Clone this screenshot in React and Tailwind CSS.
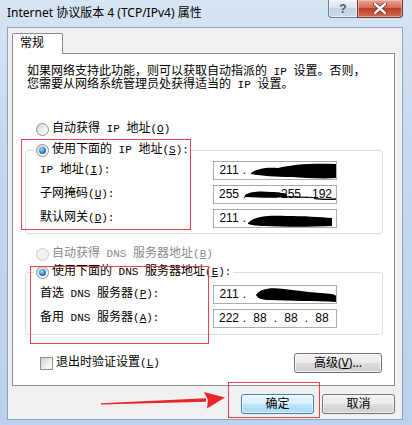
import React from "react";

const BODY = "font-[family-name:'Liberation_Mono','Noto_Sans_CJK_SC',monospace]";
const SANS = "font-[family-name:'Noto_Sans','Noto_Sans_CJK_SC',sans-serif]";
const NUM = "font-[family-name:'Liberation_Sans',sans-serif]";

function Radio({ checked, disabled }) {
  return (
    <span
      className={
        disabled
          ? "flex h-[13px] w-[13px] shrink-0 items-center justify-center rounded-full border border-[#c8c8c8] bg-[#f2f2f2]"
          : "flex h-[13px] w-[13px] shrink-0 items-center justify-center rounded-full border border-[#8e8f8f] bg-[linear-gradient(135deg,#d2d2d2,#f7f7f7_70%,#ffffff)]"
      }
    >
      {checked && (
        <span className="h-[7px] w-[7px] rounded-full bg-[radial-gradient(circle_at_40%_35%,#a9dcfa,#2b7fc4_55%,#0f4c88)]" />
      )}
    </span>
  );
}

function U({ children }) {
  return <span className="underline underline-offset-[1px]">{children}</span>;
}

function L({ children }) {
  return <span className="text-[11px]">{children}</span>;
}

function Blob({ d }) {
  return (
    <svg className="pointer-events-none absolute left-0 top-0" width="124" height="19" viewBox="0 0 124 19">
      <path d={d} fill="#000" />
    </svg>
  );
}

function IpField({ segs, blob }) {
  return (
    <div className={`relative flex h-[19px] w-[124px] shrink-0 items-center overflow-hidden border border-[#abadb3] border-t-[#a4a7ae] bg-white pl-[5px] text-[12px] text-black ${NUM}`}>
      {segs.map((s, i) => (
        <div key={i} className="flex w-[31px] shrink-0 items-center">
          <span className="w-[20px] text-center leading-[17px]">{s}</span>
          {i < 3 && <span className="w-[11px] text-center leading-[17px]">.</span>}
        </div>
      ))}
      {blob && <Blob d={blob} />}
    </div>
  );
}

function Row({ label, children }) {
  return (
    <div className="flex h-[19px] items-center justify-between">
      <span className="leading-[13px]">{label}</span>
      {children}
    </div>
  );
}

function Btn({ children, primary, className = "" }) {
  return (
    <div
      className={
        (primary
          ? "border-[#3c7fb1] bg-[linear-gradient(#eaf6fd,#d9f0fc_50%,#bee6fd_50%,#a7d9f5)] "
          : "border-[#707070] bg-[linear-gradient(#f2f2f2,#ebebeb_50%,#dddddd_50%,#cfcfcf)] ") +
        `flex h-[20px] items-center justify-center rounded-[3px] border text-[12px] text-black shadow-[inset_0_0_0_1px_rgba(255,255,255,0.7)] ${className}`
      }
    >
      {children}
    </div>
  );
}

export default function App() {
  return (
    <div className="relative flex h-[425px] w-[412px] flex-col overflow-hidden bg-[linear-gradient(180deg,#d6e4f3,#c5d8ee_35%,#bcd1eb)] pb-[5px] pl-[7px] pr-[9px]">
      {/* title bar */}
      <div className="flex h-[27px] shrink-0 items-start justify-between">
        <div className={`mt-[5px] whitespace-nowrap text-[12px] leading-[16px] text-black ${SANS}`}>
          Internet 协议版本 4 (TCP/IPv4) 属性
        </div>
        <div className="flex">
          <div className="flex h-[18px] w-[29px] items-center justify-center rounded-bl-[4px] border border-t-0 border-r-0 border-[#6b7d96] bg-[linear-gradient(#eef3f9,#d6e1ee_50%,#c3d2e4_50%,#ccdbec)] shadow-[inset_0_0_0_1px_rgba(255,255,255,0.6)]">
            <span className={`text-[12px] font-bold leading-[12px] text-[#4f5d73] ${NUM}`}>?</span>
          </div>
          <div className="flex h-[18px] w-[46px] items-center justify-center rounded-br-[4px] border border-t-0 border-[#6b3a35] bg-[linear-gradient(#e8a597,#d46a57_45%,#c1402c_50%,#d06a52)] shadow-[inset_0_0_0_1px_rgba(255,220,210,0.5)]">
            <svg width="14" height="11" viewBox="0 0 14 11">
              <path d="M2 1 L12 10 M12 1 L2 10" stroke="#5a2b25" strokeWidth="4" strokeLinecap="round" />
              <path d="M2 1 L12 10 M12 1 L2 10" stroke="#ffffff" strokeWidth="2.4" strokeLinecap="round" />
            </svg>
          </div>
        </div>
      </div>

      {/* client area */}
      <div className={`flex flex-1 flex-col border border-[#8ca2bf] bg-[#f0f0f0] pl-[4px] pr-[7px] pt-[5px] text-[12px] text-black ${BODY}`}>
        <div className="relative z-10 -mb-px flex h-[21px] w-[51px] items-center rounded-t-[2px] border border-b-0 border-[#898c95] bg-white pl-[7px]">
          <span className="leading-[13px]">常规</span>
        </div>
        <div className="flex h-[333px] flex-col border border-[#898c95] bg-white">
          <p className="pl-[14px] pt-[12px] leading-[13px]">
            如果网络支持此功能，则可以获取自动指派的<L> IP </L>设置。否则，
            <br />
            您需要从网络系统管理员处获得适当的<L> IP </L>设置。
          </p>

          <div className="ml-[23px] mt-[31px] flex h-[13px] items-center gap-[3px]">
            <Radio />
            <span className="leading-[13px]">
              自动获得<L> IP </L>地址<L>(<U>O</U>)</L>
            </span>
          </div>

          <fieldset className="ml-[12px] mt-[8px] w-[358px] rounded-[3px] border border-[#d5dfe5] pb-[5px] pl-[14px] pr-[45px] pt-[4px]">
            <legend className="-ml-[6px] px-[2px]">
              <span className="flex h-[13px] items-center gap-[3px]">
                <Radio checked />
                <span className="leading-[13px]">
                  使用下面的<L> IP </L>地址<L>(<U>S</U>):</L>
                </span>
              </span>
            </legend>
            <div className="flex flex-col gap-[5px]">
              <Row label={<><L>IP </L>地址<L>(<U>I</U>):</L></>}>
                <IpField
                  segs={["211", "", "", ""]}
                  blob="M37 11 C 42 7, 52 5, 64 6 C 78 2, 100 1, 124 2 L 124 16 C 108 17, 92 16, 78 15 C 62 15, 48 14, 37 12 Z M70 9 C 80 8, 92 8, 100 9 C 92 11, 80 11, 70 10 Z"
                />
              </Row>
              <Row label={<>子网掩码<L>(<U>U</U>):</L></>}>
                <IpField
                  segs={["255", "", "255", "192"]}
                  blob="M31 9 C 36 5, 48 5, 58 6 C 64 6, 70 7, 73 8 L 73 11 C 64 12, 48 12, 31 11 Z M72 10 L 100 11 L 100 12 L 72 11.5 Z M100 12 C 110 13, 118 13, 124 12 L 124 13.5 C 115 14.5, 106 14, 100 13 Z"
                />
              </Row>
              <Row label={<>默认网关<L>(<U>D</U>):</L></>}>
                <IpField
                  segs={["211", "", "", ""]}
                  blob="M34 13 C 40 6, 56 5, 72 6 C 90 6, 106 7, 118 8 L 118 16 C 96 17, 70 17, 50 16 C 42 16, 37 15, 34 14 Z"
                />
              </Row>
            </div>
          </fieldset>

          <div className="ml-[23px] mt-[14px] flex h-[13px] items-center gap-[3px] text-[#8a8a8a]">
            <Radio disabled />
            <span className="leading-[13px]">
              自动获得<L> DNS </L>服务器地址<L>(<U>B</U>)</L>
            </span>
          </div>

          <fieldset className="ml-[12px] mt-[5px] w-[358px] rounded-[3px] border border-[#d5dfe5] pb-[6px] pl-[14px] pr-[45px] pt-[6px]">
            <legend className="-ml-[6px] px-[2px]">
              <span className="flex h-[13px] items-center gap-[3px]">
                <Radio checked />
                <span className="leading-[13px]">
                  使用下面的<L> DNS </L>服务器地址<L>(<U>E</U>):</L>
                </span>
              </span>
            </legend>
            <div className="flex flex-col gap-[5px]">
              <Row label={<>首选<L> DNS </L>服务器<L>(<U>P</U>):</L></>}>
                <IpField
                  segs={["211", "", "", ""]}
                  blob="M42 9 C 45 3, 56 1, 70 3 C 86 5, 104 7, 118 8 C 122 9, 124 11, 124 12 L 124 16 C 104 15, 76 15, 56 14 C 48 14, 43 12, 42 9 Z"
                />
              </Row>
              <Row label={<>备用<L> DNS </L>服务器<L>(<U>A</U>):</L></>}>
                <IpField segs={["222", "88", "88", "88"]} />
              </Row>
            </div>
          </fieldset>

          <div className="mt-[18px] flex h-[20px] items-center justify-between pl-[27px] pr-[12px]">
            <div className="flex items-center gap-[3px]">
              <span className="h-[13px] w-[13px] border border-[#8e8f8f] bg-[linear-gradient(135deg,#d0d0d0,#f6f6f6_70%,#ffffff)]" />
              <span className="leading-[13px]">
                退出时验证设置<L>(<U>L</U>)</L>
              </span>
            </div>
            <Btn className="w-[88px]">
              <span className={SANS}>
                高级(<U>V</U>)...
              </span>
            </Btn>
          </div>
        </div>

        <div className="mt-[8px] flex justify-end gap-[8px]">
          <Btn primary className="w-[73px]">
            <span className={SANS}>确定</span>
          </Btn>
          <Btn className="w-[73px]">
            <span className={SANS}>取消</span>
          </Btn>
        </div>
      </div>

      {/* annotations */}
      <div className="pointer-events-none absolute left-[21px] top-[139px] h-[91px] w-[170px] border border-[#e2434b]" />
      <div className="pointer-events-none absolute left-[30px] top-[266px] h-[78px] w-[179px] border border-[#e2434b]" />
      <div className="pointer-events-none absolute left-[228px] top-[382px] h-[36px] w-[92px] border border-[#e2434b]" />
      <svg className="pointer-events-none absolute left-0 top-0" width="412" height="425" viewBox="0 0 412 425">
        <polygon points="101,403.3 206,398.2 206,401.8 101,404.5" fill="#e8262a" />
        <polygon points="204,392 225,397.5 207,408.5 208,400" fill="#e8262a" />
      </svg>
    </div>
  );
}
